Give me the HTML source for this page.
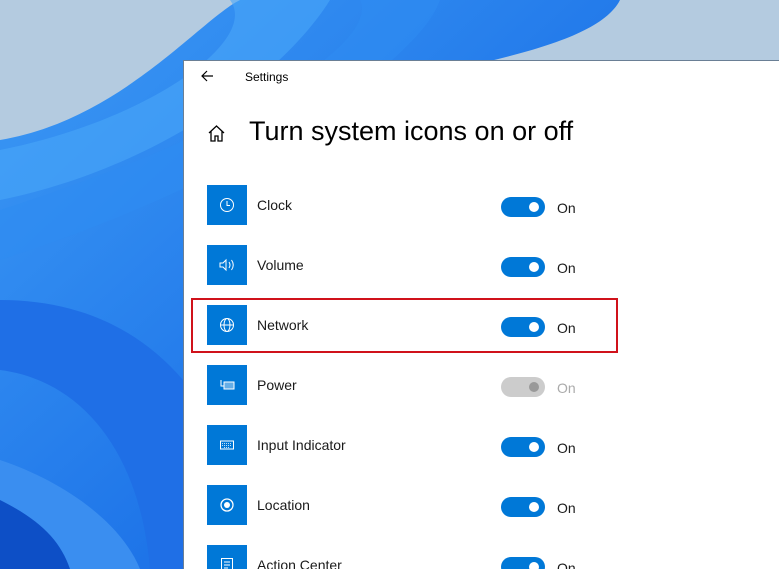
<!DOCTYPE html>
<html style="width:779px;height:569px;overflow:hidden"><head><style>
body{margin:0;width:779px;height:569px;overflow:hidden;position:relative;font-family:"Liberation Sans",sans-serif;background:#b4cbe0}
#bg{position:absolute;left:0;top:0}
.win{position:absolute;left:183px;top:60px;width:596px;height:509px;background:#fff;border-left:1px solid #6a7f95;border-top:1px solid #6a7f95}
.t{position:absolute;color:#000}
.tile{position:absolute;left:207px;width:40px;height:40px;background:#0078d7}
.tile svg{position:absolute;left:12px;top:12px}
.lab{position:absolute;left:257px;font-size:14px;color:#1a1a1a}
.tg{position:absolute;left:501px;width:44px;height:20px;border-radius:10px;background:#0078d7}
.tg:after{content:"";position:absolute;right:6px;top:5px;width:10px;height:10px;border-radius:5px;background:#fff}
.tg.off{background:#ccc}.tg.off:after{background:#999}
.on{position:absolute;left:557px;font-size:14px;color:#1a1a1a}
</style></head><body>
<svg id="bg" width="779" height="569">
<defs><linearGradient id="g1" x1="0" y1="0" x2="1" y2="1"><stop offset="0" stop-color="#3d9af5"/><stop offset="1" stop-color="#0a5ce0"/></linearGradient></defs>
<rect width="779" height="569" fill="#b4cbe0"/>
<path d="M0 140 C120 120 200 20 240 0 L620 0 C600 40 500 60 400 80 L183 80 L183 569 L0 569 Z" fill="url(#g1)"/>
<path d="M230 0 C260 40 150 120 0 150 L0 200 C150 170 280 80 330 0Z" fill="#4aa6f8" opacity=".6"/>
<path d="M360 0 C380 40 250 130 0 210 L0 260 C250 180 420 60 440 0Z" fill="#2f8cf2" opacity=".6"/>
<path d="M0 300 C80 300 140 330 183 380 L183 569 L150 569 C140 450 80 380 0 370Z" fill="#1f6fe6"/>
<path d="M0 460 C60 480 120 520 140 569 L0 569Z" fill="#3a8ef0"/>
<path d="M0 500 C40 520 60 540 70 569 L0 569Z" fill="#0d4fc6"/>
</svg>
<div class="win"></div>
<svg style="position:absolute;left:200px;top:69px" width="14" height="14"><path d="M13 7H2M7 2L2 7L7 12" stroke="#000" fill="none" stroke-width="1.2"/></svg>
<div class="t" style="left:245px;top:70px;font-size:12px">Settings</div>
<svg style="position:absolute;left:207px;top:124px" width="19" height="19"><path d="M2 9L9.5 2L17 9M4 7.5V17H8V12H11V17H15V7.5" stroke="#000" fill="none" stroke-width="1.3"/></svg>
<div class="t" style="left:249px;top:116px;font-size:27px;color:#000">Turn system icons on or off</div>

<div class="tile" style="top:185px"><svg width="16" height="16"><circle cx="8" cy="8" r="6.5" stroke="#fff" fill="none"/><path d="M8 4V8.5H11" stroke="#fff" fill="none"/></svg></div>
<div class="lab" style="top:197px">Clock</div><div class="tg" style="top:197px"></div><div class="on" style="top:200px">On</div>

<div class="tile" style="top:245px"><svg width="16" height="16"><path d="M1 6H4L7 3V13L4 10H1Z" stroke="#fff" fill="none"/><path d="M10 5Q12 8 10 11M12.5 3Q16 8 12.5 13" stroke="#fff" fill="none"/></svg></div>
<div class="lab" style="top:257px">Volume</div><div class="tg" style="top:257px"></div><div class="on" style="top:260px">On</div>

<div style="position:absolute;left:191px;top:298px;width:423px;height:51px;border:2px solid #d0121b"></div>
<div class="tile" style="top:305px"><svg width="16" height="16"><circle cx="8" cy="8" r="6.5" stroke="#fff" fill="none"/><ellipse cx="8" cy="8" rx="3" ry="6.5" stroke="#fff" fill="none"/><path d="M1.5 8H14.5" stroke="#fff"/></svg></div>
<div class="lab" style="top:317px">Network</div><div class="tg" style="top:317px"></div><div class="on" style="top:320px">On</div>

<div class="tile" style="top:365px"><svg width="16" height="16"><rect x="5" y="5" width="10" height="7" stroke="#fff" fill="#fff" fill-opacity=".4"/><path d="M2 3V9H5" stroke="#fff" fill="none"/></svg></div>
<div class="lab" style="top:377px">Power</div><div class="tg off" style="top:377px"></div><div class="on" style="top:380px;color:#aaa">On</div>

<div class="tile" style="top:425px"><svg width="16" height="16"><rect x="1.5" y="4" width="13" height="8" stroke="#fff" fill="none"/><path d="M3 6.5H13M3 8.5H13M5 10.5H11" stroke="#fff" stroke-width=".8" stroke-dasharray="1 1"/></svg></div>
<div class="lab" style="top:437px">Input Indicator</div><div class="tg" style="top:437px"></div><div class="on" style="top:440px">On</div>

<div class="tile" style="top:485px"><svg width="16" height="16"><circle cx="8" cy="8" r="6" stroke="#fff" fill="none" stroke-width="1.3"/><circle cx="8" cy="8" r="3" fill="#fff"/></svg></div>
<div class="lab" style="top:497px">Location</div><div class="tg" style="top:497px"></div><div class="on" style="top:500px">On</div>

<div class="tile" style="top:545px"><svg width="16" height="16"><rect x="2.5" y="1.5" width="11" height="13" stroke="#fff" fill="none"/><path d="M5 5H11M5 8H11M5 11H9" stroke="#fff"/></svg></div>
<div class="lab" style="top:557px">Action Center</div><div class="tg" style="top:557px"></div><div class="on" style="top:560px">On</div>
</body></html>
